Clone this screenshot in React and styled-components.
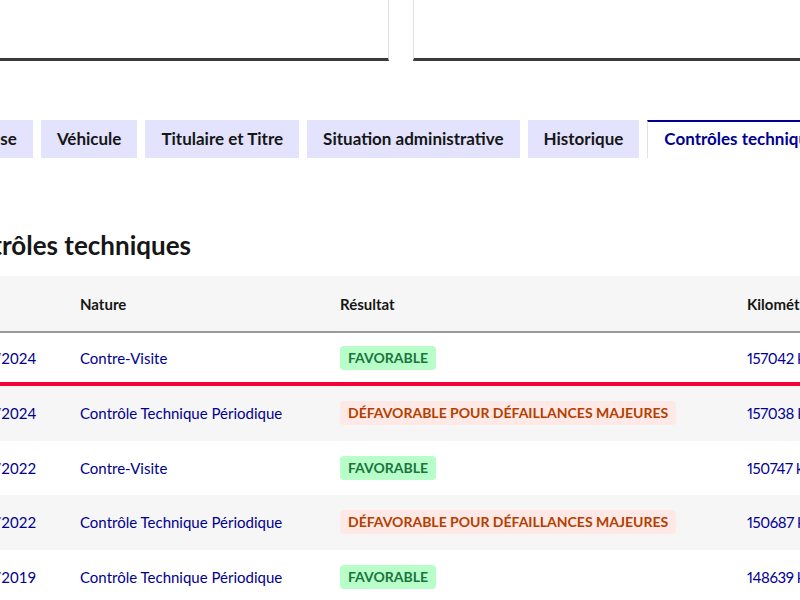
import React from "react";
import styled, { createGlobalStyle } from "styled-components";

const GlobalStyle = createGlobalStyle`
  html, body {
    margin: 0;
    padding: 0;
    background: #fff;
  }
  body {
    font-family: "Lato", "Noto Sans", sans-serif;
    color: #161616;
    overflow: hidden;
  }
`;

const Viewport = styled.div`
  width: 800px;
  height: 600px;
  overflow: hidden;
`;

const Shell = styled.div`
  width: 1000px;
  margin-left: -74px;
`;

const CardRow = styled.div`
  display: grid;
  grid-template-columns: 463px 463px;
  gap: 24px;
`;

const Card = styled.div`
  height: 58px;
  background: #fff;
  border: 1px solid #e0e0e0;
  border-top: 0;
  border-bottom: 3px solid #3a3a3a;
`;

const TabList = styled.ul`
  display: flex;
  gap: 8px;
  list-style: none;
  margin: 59px 0 0 6px;
  padding: 0;
`;

const Tab = styled.li`
  box-sizing: border-box;
  height: 38px;
  padding: 8px 16px;
  font-size: 17px;
  line-height: 22px;
  font-weight: 700;
  white-space: nowrap;
  background: ${({ active }) => (active ? "#fff" : "#e3e3fd")};
  color: ${({ active }) => (active ? "#000091" : "#161616")};
  ${({ active }) =>
    active &&
    `
    border-top: 2px solid #000091;
    border-left: 1px solid #e0e0e0;
    border-right: 1px solid #e0e0e0;
    padding-top: 6px;
  `}
`;

const Panel = styled.section`
  padding: 0 20px;
`;

const Title = styled.h2`
  margin: 70px 0 14px 0;
  font-size: 26px;
  line-height: 34px;
  font-weight: 700;
`;

const Table = styled.table`
  width: 970px;
  margin-left: -9px;
  border-collapse: separate;
  border-spacing: 0;
  table-layout: fixed;
  font-size: 15px;
`;

const HeadCell = styled.th`
  height: 55px;
  padding: 0 16px;
  text-align: left;
  font-weight: 700;
  background: #f6f6f6;
  border-bottom: 2px solid #9a9a9a;
`;

const Row = styled.tr`
  background: ${({ striped }) => (striped ? "#f6f6f6" : "#fff")};
`;

const Cell = styled.td`
  height: ${({ marked }) => (marked ? "49px" : "54.5px")};
  padding: 0 16px;
  color: #000091;
  white-space: nowrap;
  ${({ marked }) => marked && "border-bottom: 4px solid #f5003a;"}
  ${({ numeric }) =>
    numeric && "font-variant-numeric: proportional-nums; letter-spacing: -0.4px;"}
`;

const Badge = styled.span`
  display: inline-block;
  height: 24px;
  line-height: 24px;
  padding: 0 8px;
  border-radius: 4px;
  font-size: 14px;
  font-weight: 700;
  text-transform: uppercase;
  background: ${({ ok }) => (ok ? "#b8fec9" : "#ffe9e6")};
  color: ${({ ok }) => (ok ? "#18753c" : "#b34000")};
`;

const tabs = [
  "Synthèse",
  "Véhicule",
  "Titulaire et Titre",
  "Situation administrative",
  "Historique",
  "Contrôles techniques",
];

const controls = [
  { date: "14/05/2024", nature: "Contre-Visite", ok: true, km: "157042 km" },
  { date: "23/04/2024", nature: "Contrôle Technique Périodique", ok: false, km: "157038 km" },
  { date: "17/05/2022", nature: "Contre-Visite", ok: true, km: "150747 km" },
  { date: "29/04/2022", nature: "Contrôle Technique Périodique", ok: false, km: "150687 km" },
  { date: "16/05/2019", nature: "Contrôle Technique Périodique", ok: true, km: "148639 km" },
];

export default function App() {
  return (
    <Viewport>
      <GlobalStyle />
      <Shell>
        <CardRow>
          <Card />
          <Card />
        </CardRow>

        <TabList>
          {tabs.map((t, i) => (
            <Tab key={t} active={i === tabs.length - 1}>
              {t}
            </Tab>
          ))}
        </TabList>

        <Panel>
          <Title>Contrôles techniques</Title>
          <Table>
            <colgroup>
              <col style={{ width: 127 }} />
              <col style={{ width: 260 }} />
              <col style={{ width: 407 }} />
              <col />
            </colgroup>
            <thead>
              <tr>
                <HeadCell>Date</HeadCell>
                <HeadCell>Nature</HeadCell>
                <HeadCell>Résultat</HeadCell>
                <HeadCell>Kilométrage</HeadCell>
              </tr>
            </thead>
            <tbody>
              {controls.map((c, i) => (
                <Row key={c.date} striped={i % 2 === 1}>
                  <Cell marked={i === 0}>{c.date}</Cell>
                  <Cell marked={i === 0}>{c.nature}</Cell>
                  <Cell marked={i === 0}>
                    <Badge ok={c.ok}>
                      {c.ok ? "Favorable" : "Défavorable pour défaillances majeures"}
                    </Badge>
                  </Cell>
                  <Cell marked={i === 0} numeric>
                    {c.km}
                  </Cell>
                </Row>
              ))}
            </tbody>
          </Table>
        </Panel>
      </Shell>
    </Viewport>
  );
}
